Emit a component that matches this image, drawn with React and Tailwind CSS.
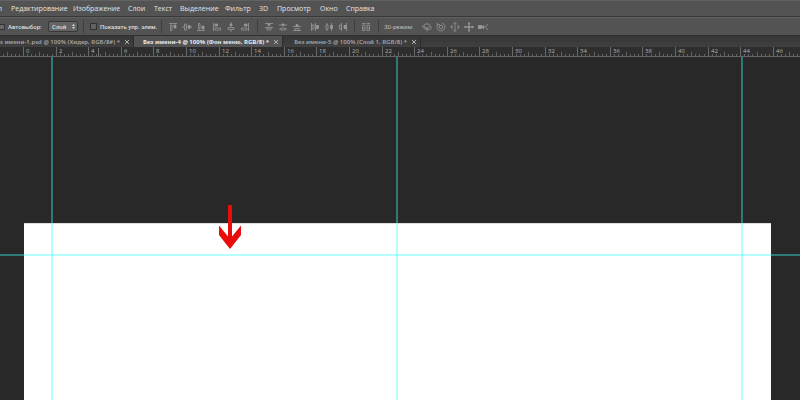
import React from "react";

const MENU = [
  ["Редактирование", "w-[62px]"],
  ["Изображение", "w-[55px]"],
  ["Слои", "w-[26px]"],
  ["Текст", "w-[26px]"],
  ["Выделение", "w-[45px]"],
  ["Фильтр", "w-[34px]"],
  ["3D", "w-[18px]"],
  ["Просмотр", "w-[43px]"],
  ["Окно", "w-[26px]"],
  ["Справка", "w-[40px]"],
];

const ICONS = {
  alignTop: <><path d="M1 1.5h8" /><path d="M2.5 3v5.5h1.5V3z" /><path d="M6 3h2v3H6z" fill="currentColor" /></>,
  alignMiddle: <><path d="M0 5h10" /><path d="M2.5 2v6h2V2z" fill="#535353" /><path d="M6.5 3.5h1.5v3H6.5z" fill="currentColor" /></>,
  alignBottom: <><path d="M1 8.5h8" /><path d="M2.5 1.5V7h1.5V1.5z" /><path d="M6 4h2v3H6z" fill="currentColor" /></>,
  alignLeft: <><path d="M1.5 1v8" /><path d="M3 2h2.5v2H3z" fill="currentColor" /><path d="M3 6h5.5v2H3z" /></>,
  alignCenter: <><path d="M5 0v10" /><path d="M4 2h2v1.5H4z" fill="currentColor" /><path d="M2 5.5h6v2H2z" fill="#535353" /></>,
  alignRight: <><path d="M8.5 1v8" /><path d="M4.5 2H7v2H4.5z" fill="currentColor" /><path d="M1.5 6H7v2H1.5z" /></>,
  distTop: <><path d="M1 1.5h8M1 5.5h8" /><path d="M4 2h2v1.5H4z" fill="currentColor" /><path d="M3 6h4v2H3z" /></>,
  distMiddle: <><path d="M1 3h8M1 7h8" /><path d="M4 2h2v1.5H4z" fill="currentColor" /><path d="M3 6h4v2H3z" fill="#535353" /></>,
  distBottom: <><path d="M1 4.5h8M1 8.5h8" /><path d="M4 2.5h2v1.5H4z" fill="currentColor" /><path d="M3 6.5h4v2H3z" /></>,
  distLeft: <><path d="M1.5 1v8M5.5 1v8" /><path d="M2 3h2v4H2z" /><path d="M6.5 3.5h2v3h-2z" fill="currentColor" /></>,
  distCenter: <><path d="M3 1v8M7.5 1v8" /><path d="M2 3h2v4H2z" fill="#535353" /><path d="M6.5 3.5h2v3h-2z" fill="currentColor" /></>,
  distRight: <><path d="M3.5 1v8M8.5 1v8" /><path d="M1.5 3h2v4h-2z" /><path d="M6 3.5h2v3H6z" fill="currentColor" /></>,
  auto: <><path d="M1 1.5h3.5M5.5 1.5H9" /><path d="M1.5 3v5.5H4V3zM6 3v5.5h2.5V3zM1.5 6H4M6 6h2.5" /></>,
  orbit: <><ellipse cx="5" cy="4" rx="3" ry="2.2" /><path d="M1.5 3C-.5 5 2 7.5 6 7.5M4.5 6l2 1.5-2 1.5M8 4c2 1 2 3-.5 3.5" /></>,
  roll: <><circle cx="5" cy="5" r="1.8" /><path d="M2 2.3A4 4 0 1 0 6 1.1M1 1l.7 2L4 2.4" /></>,
  pan: <><path d="M5 .5v9M3.5 2L5 .5 6.5 2M3.5 8L5 9.5 6.5 8M2.5 3L.7 5l1.8 2M7.5 3l1.8 2-1.8 2M1 5h2M7 5h2" /></>,
  slide: <><path d="M5 1v8M0 5h10" /><path d="M4 2L5 .5 6 2zM4 8l1 1.5L6 8zM2 4L.5 5 2 6zM8 4l1.5 1L8 6zM4 4h2v2H4z" fill="currentColor" /></>,
  zoom: <><path d="M0 3.5h4v3H0zM4 5l2-1.5v3z" fill="currentColor" /><path d="M10 2L7.5 5 10 8" /></>,
};

function ToolButton({ name, label }) {
  return (
    <button type="button" aria-label={label} className="flex h-3 w-[14px] shrink-0 items-center justify-center text-[#989898]">
      <svg width="10" height="10" viewBox="0 0 10 10" fill="none" stroke="currentColor" strokeWidth="0.8" aria-hidden="true">
        {ICONS[name]}
      </svg>
    </button>
  );
}

function Group({ items }) {
  return (
    <div className="flex">
      {items.map(([name, label]) => <ToolButton key={name} name={name} label={label} />)}
    </div>
  );
}

function Divider() {
  return <div className="h-[13px] w-px shrink-0 bg-[#3d3d3d]" />;
}

function Tab({ title, width, active }) {
  return (
    <div className={`flex shrink-0 items-center justify-end overflow-hidden border-r border-[#2c2c2c] pr-[3px] ${width} ${active ? "bg-[#535353] text-[#e8e8e8]" : "text-[#a4a4a4]"}`}>
      <button type="button" role="tab" aria-selected={active} className={`font-['Noto_Sans',sans-serif] whitespace-nowrap text-[6px] leading-[10px] ${active ? "font-bold" : "font-semibold"}`}>
        {title}
      </button>
      <button type="button" aria-label="Закрыть" className="ml-1 flex size-[6px] shrink-0 items-center justify-center text-[#b0b0b0]">
        <svg width="4" height="4" viewBox="0 0 4 4" stroke="currentColor" aria-hidden="true"><path d="M0 0l4 4M4 0L0 4" /></svg>
      </button>
    </div>
  );
}

function Ruler() {
  const origin = 23;
  const step = 32.6;
  const marks = Array.from({ length: 24 }, (_, i) => i);
  return (
    <svg className="block h-[10px] w-full shrink-0 bg-[#2e2e2e]" shapeRendering="crispEdges" aria-label="Линейка">
      {Array.from({ length: 200 }, (_, i) => {
        const n = i - 5;
        const h = n % 4 === 0 ? 4 : 2;
        return <rect key={n} x={Math.round(origin + (n * step) / 8)} y={9 - h} width="1" height={h} fill="#626262" />;
      })}
      {marks.map((i) => {
        const x = Math.round(origin + i * step);
        return (
          <g key={i}>
            <rect x={x} y="0" width="1" height="9" fill="#686868" />
            <text x={x + 3} y="6" fontSize="6" fill="#b0b0b0">{i * 2}</text>
          </g>
        );
      })}
      <rect x="98" y="1" width="1" height="8" fill="#707070" />
      <rect y="9" width="100%" height="1" fill="#646464" />
    </svg>
  );
}

export default function App() {
  return (
    <div className="flex h-screen flex-col overflow-hidden bg-[#282828] font-['Open_Sans','Noto_Sans',sans-serif]">
      <nav className="flex h-[17px] shrink-0 items-center border-t border-b border-t-[#626262] border-b-[#383838] bg-[#535353] text-[7px] leading-[12px] text-[#e4e4e4]">
        <button type="button" className="mr-[9px] flex w-[2px] shrink-0 justify-end overflow-hidden">Файл</button>
        {MENU.map(([label, width]) => (
          <button type="button" key={label} className={`shrink-0 text-left whitespace-nowrap ${width}`}>{label}</button>
        ))}
      </nav>

      <div className="flex h-[18px] shrink-0 items-center border-t border-[#606060] bg-[#535353] font-[Roboto,sans-serif] text-[6px] font-medium leading-[10px] text-[#dedede]">
        <label className="flex w-12 shrink-0 items-center gap-[3px] whitespace-nowrap">
          <input type="checkbox" className="-ml-px size-[6px] shrink-0 appearance-none border border-[#333] bg-[#686868]" />
          Автовыбор:
        </label>
        <div className="relative h-[11px] w-[30px] shrink-0">
          <select aria-label="Автовыбор" className="block h-full w-full appearance-none rounded-[2px] border border-[#383838] bg-[#646464] pl-[3px] text-[6px] leading-[9px]">
            <option>Слой</option>
            <option>Группа</option>
          </select>
          <svg className="pointer-events-none absolute top-[3px] right-[3px]" width="3" height="5" viewBox="0 0 3 5" fill="#dedede" aria-hidden="true"><path d="M0 2l1.5-2L3 2zM0 3h3L1.5 5z" /></svg>
        </div>
        <div className="ml-[5px]"><Divider /></div>
        <label className="ml-[6px] flex w-[71px] shrink-0 items-center gap-[3px] whitespace-nowrap">
          <input type="checkbox" className="size-[7px] shrink-0 appearance-none border border-[#333] bg-[#626262]" />
          Показать упр. элем.
        </label>
        <Divider />
        <div className="ml-1 mr-[2px]"><Group items={[["alignTop", "Верхние края"], ["alignMiddle", "Центры по вертикали"], ["alignBottom", "Нижние края"]]} /></div>
        <div className="mr-[5px]"><Group items={[["alignLeft", "Левые края"], ["alignCenter", "Центры по горизонтали"], ["alignRight", "Правые края"]]} /></div>
        <Divider />
        <div className="ml-1 mr-1"><Group items={[["distTop", "Распределить верхние края"], ["distMiddle", "Распределить по вертикали"], ["distBottom", "Распределить нижние края"]]} /></div>
        <div className="mr-1"><Group items={[["distLeft", "Распределить левые края"], ["distCenter", "Распределить по горизонтали"], ["distRight", "Распределить правые края"]]} /></div>
        <Divider />
        <div className="ml-1 mr-[5px]"><Group items={[["auto", "Автовыравнивание"]]} /></div>
        <Divider />
        <span className="ml-[5px] w-9 shrink-0 font-normal whitespace-nowrap text-[#bcbcbc]">3D-режим:</span>
        <Group items={[["orbit", "Вращение"], ["roll", "Поворот"], ["pan", "Перетаскивание"], ["slide", "Сдвиг"], ["zoom", "Масштаб"]]} />
      </div>

      <div role="tablist" className="flex h-3 shrink-0 border-t border-[#303030] bg-linear-to-b from-[#363636] to-[#404040]">
        <Tab title="Без имени-1.psd @ 100% (Хидер, RGB/8#) *" width="w-[134px]" active={false} />
        <Tab title="Без имени-4 @ 100% (Фон меню, RGB/8) *" width="w-[149px]" active />
        <Tab title="Без имени-5 @ 100% (Слой 1, RGB/8) *" width="w-[138px]" active={false} />
      </div>

      <Ruler />

      <main className="relative flex min-h-0 flex-1 pt-[166px] pr-[29px] pl-6">
        <div className="flex-1 border-t border-[#dcdcdc] bg-white" />
        <div className="absolute inset-y-0 left-[51px] w-[2px] bg-[#40ffff]/38" />
        <div className="absolute inset-y-0 left-[396px] w-[2px] bg-[#40ffff]/38" />
        <div className="absolute inset-y-0 left-[741px] w-[2px] bg-[#40ffff]/38" />
        <div className="absolute inset-x-0 top-[197px] h-[2px] bg-[#40ffff]/38" />
        <svg className="absolute top-[148px] left-[219px]" width="22" height="44" viewBox="0 0 22 44" fill="#e90c0c" aria-hidden="true">
          <path d="M9 0h4v31.5l9-11v9.5L11 44 0 30v-9.5l9 11z" />
        </svg>
      </main>
    </div>
  );
}
